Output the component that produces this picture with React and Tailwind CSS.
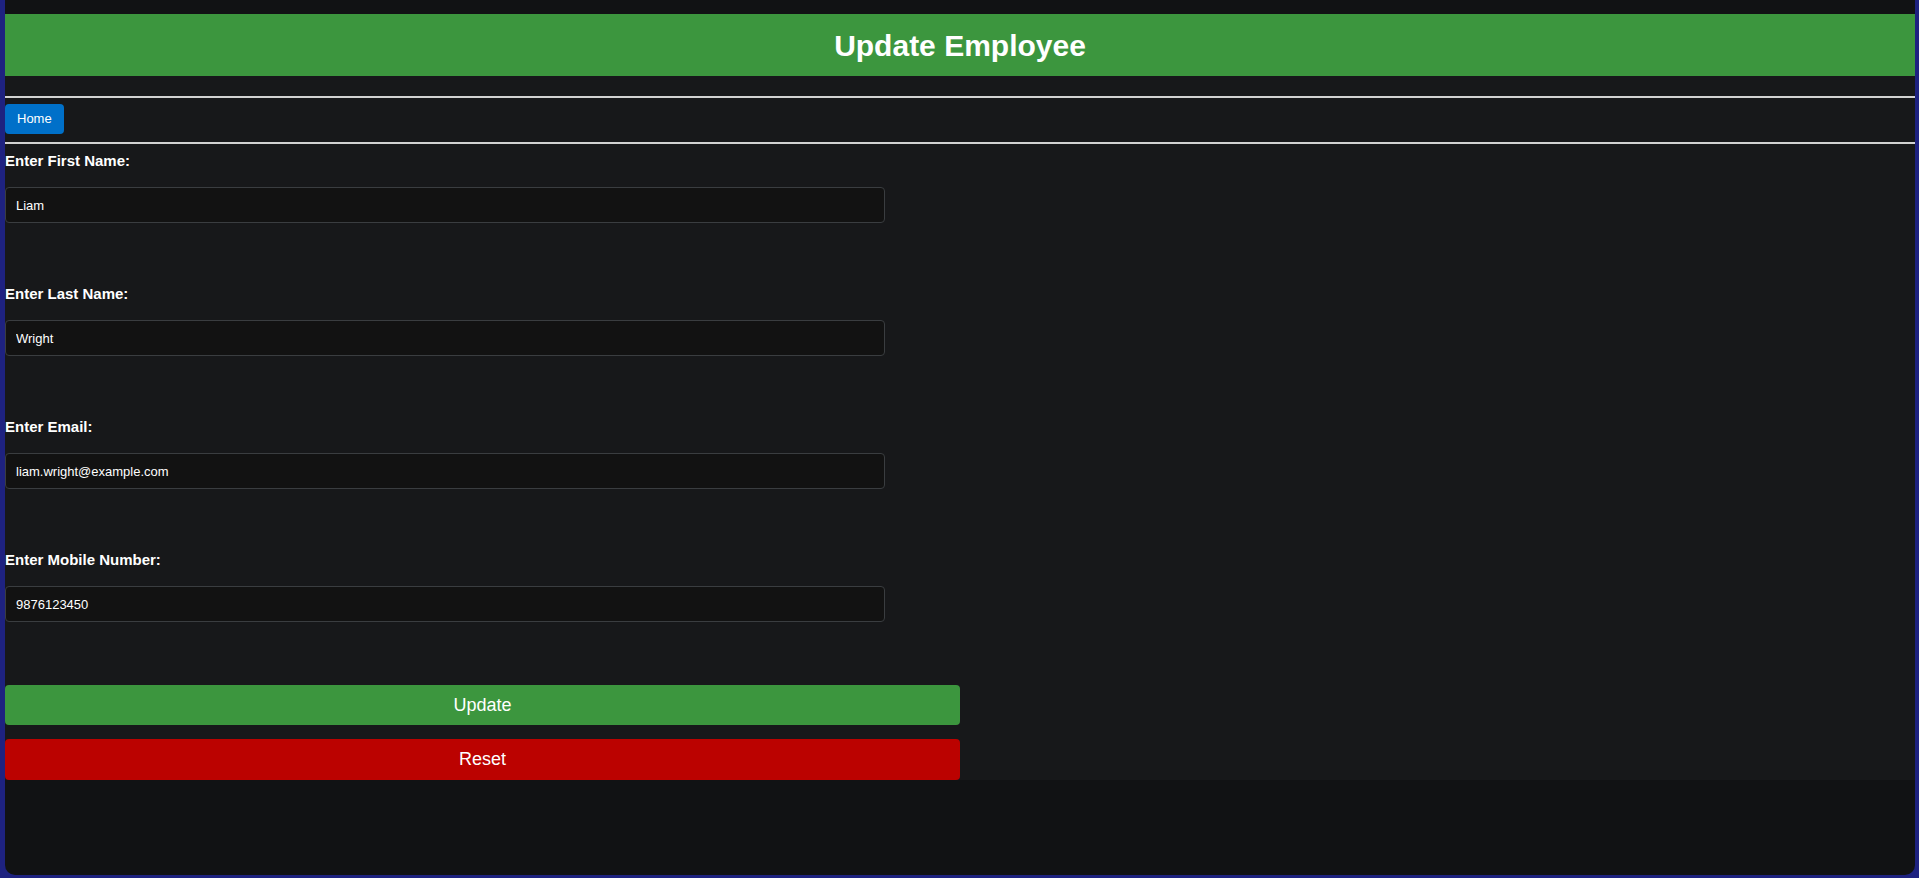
import React, { useState } from 'react';

const initial = {
  firstName: 'Liam',
  lastName: 'Wright',
  email: 'liam.wright@example.com',
  mobile: '9876123450',
};

const fields = [
  { name: 'firstName', label: 'Enter First Name:', type: 'text' },
  { name: 'lastName', label: 'Enter Last Name:', type: 'text' },
  { name: 'email', label: 'Enter Email:', type: 'email' },
  { name: 'mobile', label: 'Enter Mobile Number:', type: 'text' },
];

export default function App() {
  const [form, setForm] = useState(initial);

  const handleChange = (e) => {
    setForm({ ...form, [e.target.name]: e.target.value });
  };

  const handleReset = () => setForm({ firstName: '', lastName: '', email: '', mobile: '' });

  return (
    <div className="h-screen w-full bg-[#1e2280] pl-[5px] pr-[4px] pb-[3px] font-['Liberation_Sans',Arial,sans-serif]">
      <div className="h-full overflow-hidden rounded-b-[10px] bg-[#111214] pt-[14px]">
        <div className="bg-[#17181a]">
          <div className="flex h-[62px] items-center justify-center bg-[#3c963e]">
            <h1 className="text-[30px] font-bold text-white">Update Employee</h1>
          </div>

          <hr className="mt-[20px] border-t-2 border-[#d2d2d2]" />
          <div className="pt-[6px] pb-[8px]">
            <button className="h-[30px] rounded-[4px] bg-[#0070c9] px-[12px] text-[13px] text-white">Home</button>
          </div>
          <hr className="border-t-2 border-[#d2d2d2]" />

          <form onSubmit={(e) => e.preventDefault()} className="pt-[8px]">
            {fields.map((f) => (
              <div key={f.name} className="mb-[62px]">
                <label className="block text-[15px] leading-[17px] font-bold text-white">{f.label}</label>
                <input
                  name={f.name}
                  type={f.type}
                  value={form[f.name]}
                  onChange={handleChange}
                  className="mt-[18px] block h-[36px] w-[880px] rounded-[4px] border border-[#3a3d40] bg-[#121212] px-[10px] text-[13px] text-white outline-none"
                />
              </div>
            ))}

            <div className="flex w-[955px] flex-col gap-[14px] pt-[1px]">
              <button type="submit" className="h-[40px] rounded-[4px] bg-[#3c963e] text-[18px] text-white">Update</button>
              <button type="button" onClick={handleReset} className="h-[41px] rounded-[4px] bg-[#bb0200] text-[18px] text-white">Reset</button>
            </div>
          </form>
        </div>
      </div>
    </div>
  );
}
